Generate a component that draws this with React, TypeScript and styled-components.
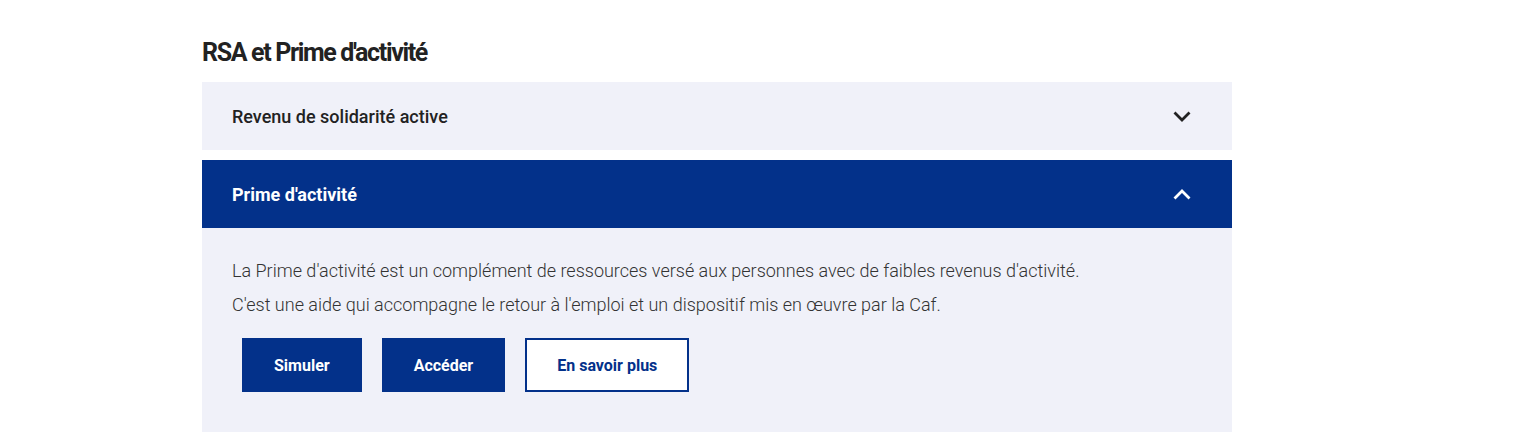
import React from "react";
import styled, { createGlobalStyle } from "styled-components";

const Global = createGlobalStyle`
  html, body { margin: 0; padding: 0; background: #fff; }
  body { font-family: Roboto, "Liberation Sans", Arial, sans-serif; color: #222; }
  * { box-sizing: border-box; }
`;

const BLUE = "#03318a";
const LIGHT = "#f0f1f9";

const Section = styled.section`
  width: 1030px;
  margin: 0 0 0 202px;
  padding-top: 36px;
`;

const Title = styled.h2`
  margin: 0 0 12px;
  font-size: 25px;
  line-height: 34px;
  font-weight: 700;
  letter-spacing: -1.35px;
  color: #222;
`;

const List = styled.div`
  display: flex;
  flex-direction: column;
  gap: 10px;
`;

const Item = styled.div``;

const Header = styled.button<{ $open?: boolean }>`
  display: flex;
  width: 100%;
  height: 68px;
  align-items: center;
  justify-content: space-between;
  padding: 0 41px 0 30px;
  border: 0;
  margin: 0;
  cursor: pointer;
  font-family: inherit;
  font-size: 18px;
  font-weight: ${(p) => (p.$open ? 700 : 500)};
  background: ${(p) => (p.$open ? BLUE : LIGHT)};
  color: ${(p) => (p.$open ? "#fff" : "#222")};
  text-align: left;
`;

const Panel = styled.div`
  background: ${LIGHT};
  padding: 31px 30px 40px;
`;

const Text = styled.p`
  margin: 0 0 10px;
  font-size: 18px;
  line-height: 24px;
  font-weight: 300;
  color: #333;
`;

const Buttons = styled.div`
  display: flex;
  gap: 20px;
  margin: 21px 0 0 10px;
`;

const Btn = styled.a<{ $outline?: boolean }>`
  display: inline-flex;
  align-items: center;
  justify-content: center;
  height: 54px;
  padding: 0 30px;
  font-size: 16px;
  font-weight: 700;
  text-decoration: none;
  background: ${(p) => (p.$outline ? "#fff" : BLUE)};
  color: ${(p) => (p.$outline ? BLUE : "#fff")};
  border: 2px solid ${BLUE};
`;

const Chevron = ({ up, color }: { up?: boolean; color: string }) => (
  <svg width="18" height="11" viewBox="0 0 18 11" fill="none">
    <path
      d={up ? "M1.5 9.5 L9 2 L16.5 9.5" : "M1.5 1.5 L9 9 L16.5 1.5"}
      stroke={color}
      strokeWidth="2.8"
    />
  </svg>
);

export default function App() {
  return (
    <>
      <Global />
      <Section>
        <Title>RSA et Prime d'activité</Title>
        <List>
          <Item>
            <Header>
              <span>Revenu de solidarité active</span>
              <Chevron color="#222" />
            </Header>
          </Item>
          <Item>
            <Header $open>
              <span>Prime d'activité</span>
              <Chevron up color="#fff" />
            </Header>
            <Panel>
              <Text>
                La Prime d'activité est un complément de ressources versé aux personnes avec de faibles revenus d'activité.
              </Text>
              <Text>
                C'est une aide qui accompagne le retour à l'emploi et un dispositif mis en œuvre par la Caf.
              </Text>
              <Buttons>
                <Btn href="#">Simuler</Btn>
                <Btn href="#">Accéder</Btn>
                <Btn href="#" $outline>
                  En savoir plus
                </Btn>
              </Buttons>
            </Panel>
          </Item>
        </List>
      </Section>
    </>
  );
}
